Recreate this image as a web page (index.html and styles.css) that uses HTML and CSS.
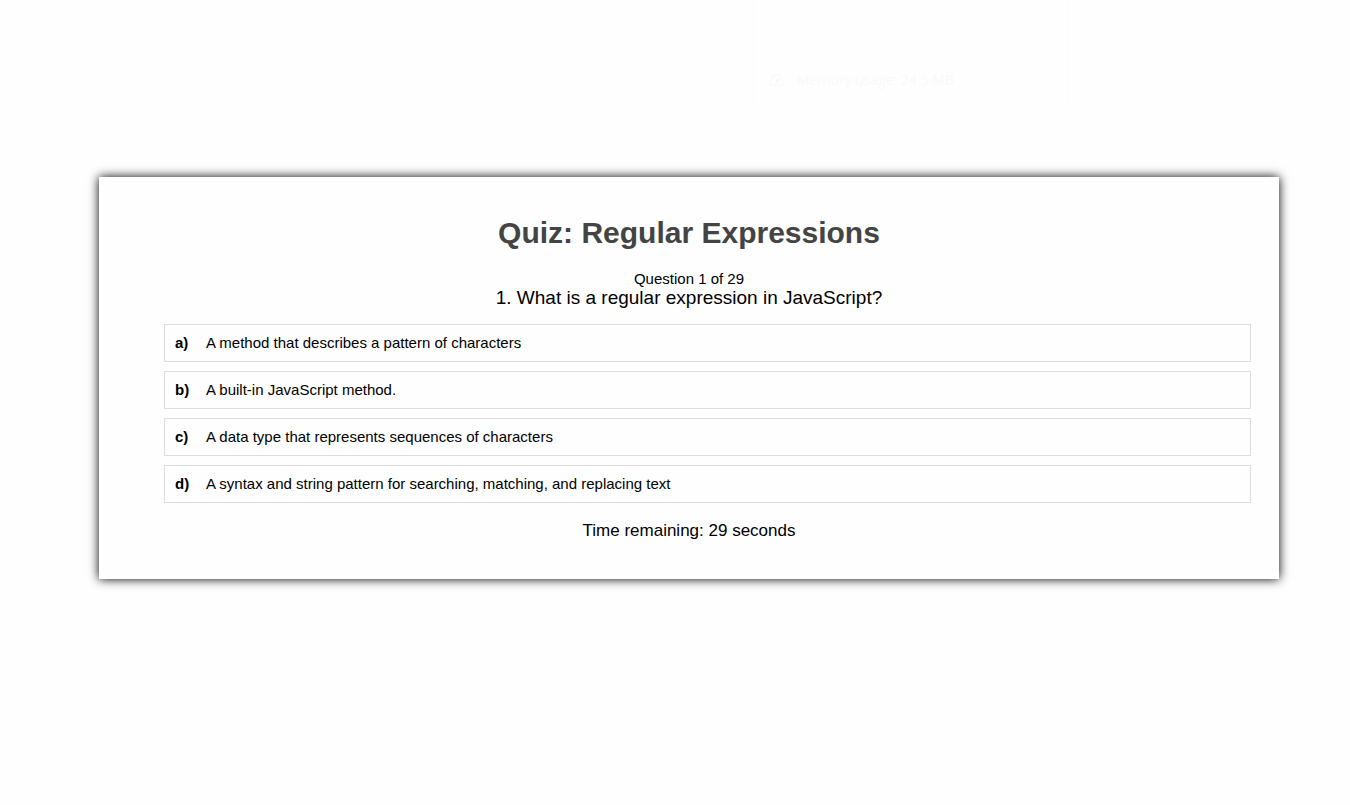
FILE: index.html
```html
<!DOCTYPE html>
<html lang="en">
<head>
<meta charset="utf-8">
<title>Quiz: Regular Expressions</title>
<link rel="stylesheet" href="styles.css">
</head>
<body>
<aside class="tab-card">
  <svg class="gauge" viewBox="0 0 16 12" aria-hidden="true">
    <path d="M11 1.4A7.2 7.2 0 0 0 1.6 10.6Q1.9 11.2 2.7 11.2h10.6Q14.1 11.2 14.4 10.6A7.2 7.2 0 0 0 14.4 4.8"/>
    <path class="needle" d="M13.4 2 9.2 8.4A1.5 1.5 0 1 1 7 6.4z"/>
  </svg>
  <span>Memory usage: 24.5 MB</span>
</aside>
<main class="quiz">
  <h1 class="quiz-title">Quiz: Regular Expressions</h1>
  <p class="progress">Question 1 of 29</p>
  <h2 class="question">1. What is a regular expression in JavaScript?</h2>
  <ul class="options">
    <li><button class="option" type="button"><b class="letter">a)</b><span>A method that describes a pattern of characters</span></button></li>
    <li><button class="option" type="button"><b class="letter">b)</b><span>A built-in JavaScript method.</span></button></li>
    <li><button class="option" type="button"><b class="letter">c)</b><span>A data type that represents sequences of characters</span></button></li>
    <li><button class="option" type="button"><b class="letter">d)</b><span>A syntax and string pattern for searching, matching, and replacing text</span></button></li>
  </ul>
  <p class="timer">Time remaining: 29 seconds</p>
</main>
</body>
</html>
```
FILE: styles.css
```css
* {
  box-sizing: border-box;
}

body {
  margin: 0;
  padding: 177px 71px 40px 99px;
  background: #fefefe;
  color: #000;
  font-family: "Liberation Sans", Arial, sans-serif;
  font-size: 15px;
}

.tab-card {
  position: absolute;
  top: 0;
  left: 752px;
  width: 317px;
  display: flex;
  align-items: center;
  gap: 12px;
  padding: 70px 15px 20px;
  border: 2px solid #fdfdfd;
  border-top: 0;
  border-radius: 0 0 8px 8px;
  color: #f9f9f9;
  font-family: "Open Sans", "Noto Sans", sans-serif;
  font-size: 14px;
  line-height: 20px;
}

.gauge {
  width: 16px;
  height: 12px;
  fill: none;
  stroke: currentColor;
  stroke-width: 1.4;
}

.gauge .needle {
  fill: currentColor;
  stroke: none;
}

.quiz {
  padding: 38px 28px 36px;
  background: #fefefe;
  box-shadow: 0 0 10px #000;
  text-align: center;
}

.quiz-title {
  margin: 0 0 19px;
  color: #444;
  font-size: 30px;
  line-height: 36px;
}

.progress {
  margin: 0;
  line-height: 17px;
}

.question {
  margin: 0;
  font-size: 19px;
  font-weight: 400;
  line-height: 21px;
}

.options {
  display: grid;
  gap: 9px;
  margin: 16px 0;
  padding: 0 0 0 37px;
  list-style: none;
}

.option {
  display: flex;
  align-items: center;
  width: 100%;
  padding: 9px 10px;
  border: 1px solid #ddd;
  background: #fefefe;
  color: inherit;
  font: inherit;
  line-height: 18px;
  text-align: left;
  cursor: pointer;
}

.letter {
  width: 31px;
}

.timer {
  margin: 0;
  font-size: 17px;
  line-height: 24px;
}
```
